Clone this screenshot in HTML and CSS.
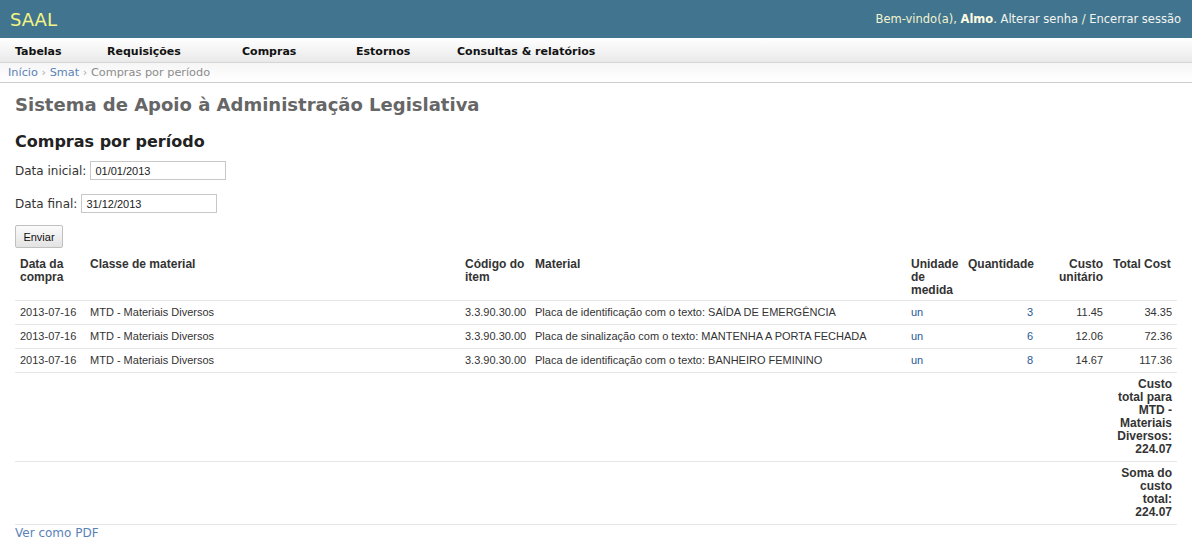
FILE: index.html
```html
<!DOCTYPE html>
<html lang="pt">
<head>
<meta charset="utf-8">
<title>SAAL - Compras por período</title>
<link rel="stylesheet" href="styles.css">
</head>
<body>
<header class="topbar">
  <a class="brand" href="#">SAAL</a>
  <div class="user">Bem-vindo(a), <strong>Almo</strong>. <a href="#">Alterar senha</a> / <a href="#">Encerrar sessão</a></div>
</header>
<nav class="menu">
  <a class="m1" href="#">Tabelas</a>
  <a class="m2" href="#">Requisições</a>
  <a class="m3" href="#">Compras</a>
  <a class="m4" href="#">Estornos</a>
  <a class="m5" href="#">Consultas &amp; relatórios</a>
</nav>
<div class="crumbs"><a href="#">Início</a> <span class="sep">›</span> <a href="#">Smat</a> <span class="sep">›</span> <span class="cur">Compras por período</span></div>
<main class="content">
  <h1 class="site">Sistema de Apoio à Administração Legislativa</h1>
  <h2 class="title">Compras por período</h2>
  <form class="filter">
    <div class="field"><label>Data inicial:</label><input type="text" value="01/01/2013"></div>
    <div class="field"><label>Data final:</label><input type="text" value="31/12/2013"></div>
    <button type="button" class="btn">Enviar</button>
  </form>
  <table class="report">
    <colgroup>
      <col class="c1"><col class="c2"><col class="c3"><col class="c4"><col class="c5"><col class="c6"><col class="c7"><col class="c8">
    </colgroup>
    <thead>
      <tr>
        <th>Data da compra</th>
        <th>Classe de material</th>
        <th>Código do item</th>
        <th>Material</th>
        <th>Unidade de medida</th>
        <th>Quantidade</th>
        <th class="num">Custo unitário</th>
        <th>Total Cost</th>
      </tr>
    </thead>
    <tbody>
      <tr>
        <td>2013-07-16</td><td>MTD - Materiais Diversos</td><td>3.3.90.30.00</td><td>Placa de identificação com o texto: SAÍDA DE EMERGÊNCIA</td><td class="lnk">un</td><td class="num lnk">3</td><td class="num">11.45</td><td class="num">34.35</td>
      </tr>
      <tr>
        <td>2013-07-16</td><td>MTD - Materiais Diversos</td><td>3.3.90.30.00</td><td>Placa de sinalização com o texto: MANTENHA A PORTA FECHADA</td><td class="lnk">un</td><td class="num lnk">6</td><td class="num">12.06</td><td class="num">72.36</td>
      </tr>
      <tr>
        <td>2013-07-16</td><td>MTD - Materiais Diversos</td><td>3.3.90.30.00</td><td>Placa de identificação com o texto: BANHEIRO FEMININO</td><td class="lnk">un</td><td class="num lnk">8</td><td class="num">14.67</td><td class="num">117.36</td>
      </tr>
      <tr class="total">
        <td colspan="7"></td><td class="num">Custo total para MTD - Materiais Diversos: 224.07</td>
      </tr>
      <tr class="total">
        <td colspan="7"></td><td class="num">Soma do custo total: 224.07</td>
      </tr>
    </tbody>
  </table>
  <a class="pdf" href="#">Ver como PDF</a>
</main>
</body>
</html>
```

FILE: styles.css
```css
* { box-sizing: border-box; }
html, body { margin: 0; padding: 0; background: #fff; }
body { font-family: "DejaVu Sans", sans-serif; color: #333; }
a { text-decoration: none; }

.topbar {
  height: 38px;
  background: #41758f;
  display: flex;
  align-items: center;
  justify-content: space-between;
  padding: 0 11px 0 10px;
}
.brand { color: #f4f484; font-size: 18px; }
.user { color: #f3f3cf; font-size: 11.5px; }
.user strong { color: #fffbe0; }
.user a { color: #f4f4f0; }

.menu {
  height: 25px;
  background: linear-gradient(#ffffff, #e9e9e9);
  border-bottom: 1px solid #d6d6d6;
  display: flex;
  align-items: center;
  padding-left: 15px;
  padding-top: 2px;
}
.menu a { color: #111; font-weight: bold; font-size: 11px; }
.m1 { width: 92px; }
.m2 { width: 135px; }
.m3 { width: 114px; }
.m4 { width: 101px; }

.crumbs {
  height: 20px;
  background: linear-gradient(#f6f6f6, #ffffff);
  border-bottom: 1px solid #cfcfcf;
  padding-left: 8px;
  font-size: 11.3px;
  line-height: 20px;
  color: #999;
}
.crumbs a { color: #5a82b8; }
.crumbs .sep { color: #aaa; }
.crumbs .cur { color: #8c8c8c; }

.content { padding: 0 15px; }
.site {
  margin: 0;
  padding-top: 11px;
  font-size: 18px;
  line-height: 22px;
  color: #666;
}
.title {
  margin: 16px 0 0;
  font-size: 16px;
  line-height: 20px;
  color: #222;
}
.filter { margin-top: 9px; }
.field { display: flex; align-items: center; font-size: 12px; color: #333; height: 19px; margin-bottom: 14px; }
.field label { margin-right: 4px; }
.field input {
  width: 136px;
  height: 19px;
  border: 1px solid #c8c8c8;
  padding: 0 4px;
  font-family: "Liberation Sans", Arial, sans-serif;
  font-size: 11px;
  color: #222;
}
.btn {
  display: block;
  margin-top: -2px;
  width: 48px;
  height: 23px;
  border: 1px solid #c0c0c0;
  border-radius: 2px;
  background: linear-gradient(#fbfbfb, #e3e3e3);
  font-family: "Liberation Sans", Arial, sans-serif;
  font-size: 11px;
  color: #111;
  padding: 0;
}

.report {
  margin-top: 5px;
  width: 100%;
  border-collapse: collapse;
  table-layout: fixed;
  font-family: "Liberation Sans", Arial, sans-serif;
  border-bottom: 1px solid #e6e6e6;
}
.c1 { width: 70px; }
.c2 { width: 375px; }
.c3 { width: 70px; }
.c4 { width: 376px; }
.c5 { width: 57px; }
.c6 { width: 75px; }
.c7 { width: 70px; }
.c8 { width: 69px; }
.report th {
  text-align: left;
  vertical-align: top;
  font-size: 12px;
  line-height: 13px;
  padding: 5px 5px 3px;
  color: #333;
}
.report th.num { text-align: right; }
.report td {
  font-size: 11px;
  line-height: 13px;
  padding: 5px 5px;
  border-top: 1px solid #e6e6e6;
  color: #333;
  vertical-align: top;
  white-space: nowrap;
}
.report td.num { text-align: right; }
.report td.lnk { color: #1f5a96; }
.report tr.total td { font-weight: bold; font-size: 12px; white-space: normal; color: #333; }

.pdf {
  display: block;
  font-size: 12px;
  line-height: 16px;
  color: #5a82b8;
}
```
